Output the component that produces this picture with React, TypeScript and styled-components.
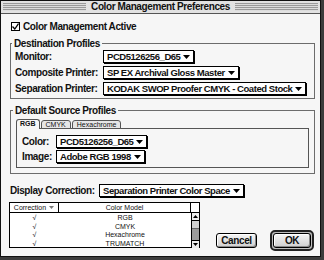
import styled, { createGlobalStyle } from 'styled-components';

const GlobalStyle = createGlobalStyle`
  html, body {
    margin: 0;
    padding: 0;
    background: #3c3c3c;
  }
  body {
    width: 324px;
    height: 260px;
    overflow: hidden;
  }
`;

const uiFont = `"Liberation Sans", Arial, sans-serif`;

const Window = styled.div`
  width: 321px;
  height: 257px;
  box-sizing: border-box;
  border: 1px solid #111;
  background: #f6f6f6;
  display: flex;
  flex-direction: column;
  font-family: ${uiFont};
  font-weight: 700;
  font-size: 10px;
  letter-spacing: -0.4px;
  color: #111;
`;

const TitleBar = styled.div`
  height: 12px;
  flex: none;
  border-bottom: 1px solid #555;
  background: #e2e2e2;
  display: flex;
  align-items: center;
  padding: 0 2px;
`;

const Stripes = styled.div`
  flex: 1;
  height: 8px;
  background: repeating-linear-gradient(to bottom, #9a9a9a 0 1px, #dcdcdc 1px 2px);
`;

const Title = styled.div`
  padding: 0 5px;
  line-height: 12px;
  white-space: nowrap;
`;

const Body = styled.div`
  flex: 1;
  display: flex;
  flex-direction: column;
  padding: 0 5px 0 9px;
`;

const CheckRow = styled.label`
  display: flex;
  align-items: center;
  gap: 3px;
  height: 11px;
  margin: 7px 0 0 1px;
`;

const CheckBox = styled.span`
  width: 9px;
  height: 9px;
  box-sizing: border-box;
  border: 1px solid #000;
  background: #fff;
  display: flex;
  align-items: center;
  justify-content: center;
`;

const Group = styled.fieldset<{ $pad: string }>`
  margin: 6px 0 0;
  padding: ${p => p.$pad};
  border: 1px solid #6c6c6c;
  min-width: 0;
`;

const Legend = styled.legend`
  padding: 0 2px;
  margin-left: -3px;
  line-height: 11px;
`;

const Rows = styled.div<{ $gap: number }>`
  display: flex;
  flex-direction: column;
  gap: ${p => p.$gap}px;
`;

const FieldRow = styled.div`
  display: flex;
  align-items: center;
  height: 13px;
`;

const FieldLabel = styled.span<{ $w: number }>`
  width: ${p => p.$w}px;
  flex: none;
  white-space: nowrap;
`;

const PopupBox = styled.div`
  display: inline-flex;
  align-items: center;
  gap: 3px;
  height: 13px;
  box-sizing: border-box;
  padding: 0 3px;
  background: #fff;
  border: 1px solid #000;
  box-shadow: 1px 1px 0 #000;
  font-size: 9.5px;
  line-height: 11px;
  letter-spacing: -0.45px;
  white-space: nowrap;
`;

const TabStrip = styled.div`
  display: flex;
  align-items: flex-end;
  height: 10px;
  margin: 3px 0 -1px 0;
`;

const Tab = styled.div<{ $active?: boolean }>`
  position: relative;
  z-index: ${p => (p.$active ? 1 : 0)};
  height: ${p => (p.$active ? 10 : 9)}px;
  box-sizing: border-box;
  padding: 0 ${p => (p.$active ? 3 : 4)}px;
  margin-right: 1px;
  border: 1px solid #555;
  border-bottom: ${p => (p.$active ? 'none' : '1px solid #555')};
  border-radius: 3px 3px 0 0;
  background: ${p => (p.$active ? '#f6f6f6' : '#e6e6e6')};
  font-size: 7px;
  letter-spacing: 0;
  font-weight: ${p => (p.$active ? 700 : 400)};
  line-height: 8px;
`;

const TabPanel = styled.div`
  border: 1px solid #555;
  padding: 6px 5px 4px;
`;

const Spacer = styled.div<{ $h: number }>`
  height: ${p => p.$h}px;
  flex: none;
`;

const BottomRow = styled.div`
  display: flex;
  height: 49px;
  margin-top: 5px;
`;

const ListBox = styled.div`
  width: 191px;
  height: 46px;
  margin-left: -1px;
  box-sizing: border-box;
  border: 1px solid #000;
  background: #fff;
  display: flex;
  flex-direction: column;
  font-weight: 400;
  font-size: 7px;
  letter-spacing: 0;
`;

const ListHeader = styled.div`
  display: grid;
  grid-template-columns: 49px 1fr 8px;
  height: 9px;
  border-bottom: 1px solid #000;
  line-height: 9px;
`;

const HeadCell = styled.div`
  border-right: 1px solid #000;
  display: flex;
  align-items: center;
  justify-content: center;
  gap: 3px;

  &:last-child {
    border-right: none;
  }
`;

const ListBody = styled.div`
  flex: 1;
  display: flex;
`;

const ListRows = styled.div`
  flex: 1;
  display: flex;
  flex-direction: column;
  padding-top: 1px;
`;

const ListRow = styled.div`
  display: grid;
  grid-template-columns: 49px 1fr;
  height: 8.5px;
  line-height: 8.5px;
  text-align: center;
`;

const Scrollbar = styled.div`
  width: 7px;
  border-left: 1px solid #000;
  display: flex;
  flex-direction: column;
`;

const ScrollArrow = styled.div<{ $down?: boolean }>`
  height: 7px;
  flex: none;
  background: #eee;
  border-top: ${p => (p.$down ? '1px solid #000' : 'none')};
  border-bottom: ${p => (p.$down ? 'none' : '1px solid #000')};
  display: flex;
  align-items: center;
  justify-content: center;
`;

const ScrollTrack = styled.div`
  flex: 1;
  background: #9c9c9c;
  display: flex;
  flex-direction: column;
`;

const ScrollThumb = styled.div`
  height: 8px;
  box-sizing: border-box;
  background: #d2d2d2;
  border-bottom: 1px solid #666;
`;

const ButtonGroup = styled.div`
  flex: 1;
  display: flex;
  align-items: center;
  justify-content: flex-end;
  align-self: flex-end;
  gap: 13px;
  padding-right: 1px;
`;

const Button = styled.button`
  font: inherit;
  letter-spacing: inherit;
  color: #111;
  height: 15px;
  width: 41px;
  padding: 0;
  box-sizing: border-box;
  border: 1px solid #000;
  border-radius: 3px;
  background: linear-gradient(#f6f6f6, #cfcfcf);
  box-shadow: inset 1px 1px 0 #fff, inset -1px -1px 0 #8a8a8a;
  line-height: 13px;
`;

const DefaultRing = styled.div`
  display: flex;
  padding: 1px;
  border: 2px solid #222;
  border-radius: 5px;
  background: #bdbdbd;

  ${Button} {
    width: 38px;
  }
`;

function Popup({ children }: { children: string }) {
  return (
    <PopupBox>
      {children}
      <svg width="7" height="4" viewBox="0 0 7 4">
        <polygon points="0,0 7,0 3.5,4" fill="#000" />
      </svg>
    </PopupBox>
  );
}

const models = ['RGB', 'CMYK', 'Hexachrome', 'TRUMATCH'];

export default function App() {
  return (
    <>
      <GlobalStyle />
      <Window>
        <TitleBar>
          <Stripes />
          <Title>Color Management Preferences</Title>
          <Stripes />
        </TitleBar>
        <Body>
          <CheckRow>
            <CheckBox>
              <svg width="7" height="7" viewBox="0 0 7 7">
                <path d="M0.5 3.5 L2.8 6 L6.5 0.5" stroke="#000" strokeWidth="1.3" fill="none" />
              </svg>
            </CheckBox>
            Color Management Active
          </CheckRow>

          <Group $pad="1px 5px 3px 4px">
            <Legend>Destination Profiles</Legend>
            <Rows $gap={3}>
              <FieldRow>
                <FieldLabel $w={88}>Monitor:</FieldLabel>
                <Popup>PCD5126256_D65</Popup>
              </FieldRow>
              <FieldRow>
                <FieldLabel $w={88}>Composite Printer:</FieldLabel>
                <Popup>SP EX Archival Gloss Master</Popup>
              </FieldRow>
              <FieldRow>
                <FieldLabel $w={88}>Separation Printer:</FieldLabel>
                <Popup>KODAK SWOP Proofer CMYK - Coated Stock</Popup>
              </FieldRow>
            </Rows>
          </Group>

          <Group $pad="0 5px 5px 5px">
            <Legend>Default Source Profiles</Legend>
            <TabStrip>
              <Tab $active>RGB</Tab>
              <Tab>CMYK</Tab>
              <Tab>Hexachrome</Tab>
            </TabStrip>
            <TabPanel>
              <Rows $gap={2}>
                <FieldRow>
                  <FieldLabel $w={34}>Color:</FieldLabel>
                  <Popup>PCD5126256_D65</Popup>
                </FieldRow>
                <FieldRow>
                  <FieldLabel $w={34}>Image:</FieldLabel>
                  <Popup>Adobe RGB 1998</Popup>
                </FieldRow>
              </Rows>
            </TabPanel>
          </Group>

          <Spacer $h={10} />
          <FieldRow>
            <FieldLabel $w={89}>Display Correction:</FieldLabel>
            <Popup>Separation Printer Color Space</Popup>
          </FieldRow>

          <BottomRow>
            <ListBox>
              <ListHeader>
                <HeadCell>
                  Correction
                  <svg width="5" height="3" viewBox="0 0 5 3">
                    <polygon points="0,0 5,0 2.5,3" fill="#777" />
                  </svg>
                </HeadCell>
                <HeadCell>Color Model</HeadCell>
                <HeadCell />
              </ListHeader>
              <ListBody>
                <ListRows>
                  {models.map(m => (
                    <ListRow key={m}>
                      <span>√</span>
                      <span>{m}</span>
                    </ListRow>
                  ))}
                </ListRows>
                <Scrollbar>
                  <ScrollArrow>
                    <svg width="5" height="3" viewBox="0 0 5 3">
                      <polygon points="0,3 5,3 2.5,0" fill="#000" />
                    </svg>
                  </ScrollArrow>
                  <ScrollTrack>
                    <ScrollThumb />
                  </ScrollTrack>
                  <ScrollArrow $down>
                    <svg width="5" height="3" viewBox="0 0 5 3">
                      <polygon points="0,0 5,0 2.5,3" fill="#000" />
                    </svg>
                  </ScrollArrow>
                </Scrollbar>
              </ListBody>
            </ListBox>
            <ButtonGroup>
              <Button>Cancel</Button>
              <DefaultRing>
                <Button>OK</Button>
              </DefaultRing>
            </ButtonGroup>
          </BottomRow>
        </Body>
      </Window>
    </>
  );
}
